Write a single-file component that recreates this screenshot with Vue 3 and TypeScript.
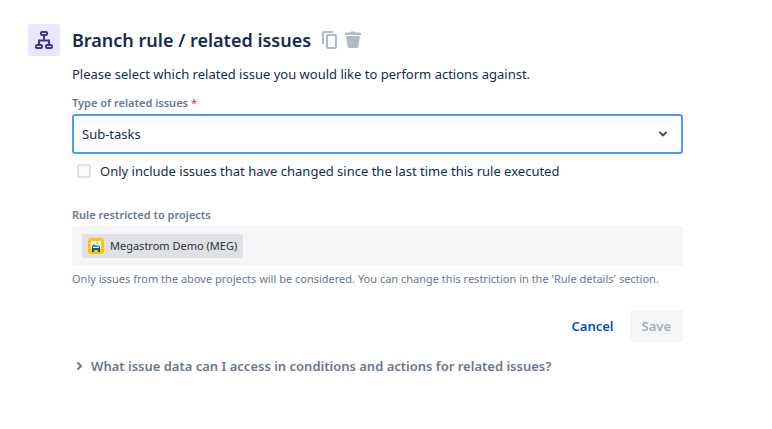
<script setup lang="ts">
import { ref } from 'vue'

const issueTypes: string[] = ['Sub-tasks', 'Parent', 'Stories', 'Epic']
const selectedType = ref<string>('Sub-tasks')
const onlyChanged = ref<boolean>(false)
</script>

<template>
  <main class="panel">
    <div class="badge">
      <svg width="18" height="18" viewBox="0 0 18 18" fill="none" stroke="currentColor" stroke-width="2" aria-hidden="true">
        <rect x="6" y="1" width="6" height="3" rx="1" />
        <rect x="1" y="14" width="6" height="3" rx="1" />
        <rect x="11" y="14" width="6" height="3" rx="1" />
        <path d="M9 4v5M4 14V9.500h10V14" />
      </svg>
    </div>

    <form class="content" @submit.prevent>
      <header class="heading">
        <h1>Branch rule / related issues</h1>
        <div class="tools">
          <button type="button" class="tool" aria-label="Duplicate">
            <svg width="16" height="18" viewBox="0 0 16 18" fill="none" stroke="currentColor" aria-hidden="true">
              <path d="M1 13V2q0-1 1-1h9" stroke-width="2" />
              <rect x="5" y="4" width="9" height="13" rx="1" stroke-width="2" />
            </svg>
          </button>
          <button type="button" class="tool" aria-label="Delete">
            <svg width="16" height="18" viewBox="0 0 16 18" fill="currentColor" aria-hidden="true">
              <path d="M0 2.500q0-1 1-1h4.500q0-1 1-1h3q1 0 1 1H15q1 0 1 1V4H0z" />
              <path d="M1 5h14l-1.600 10.600q-.2 1.400-1.400 1.400H4q-1.200 0-1.400-1.400z" />
            </svg>
          </button>
        </div>
      </header>

      <p class="intro">Please select which related issue you would like to perform actions against.</p>

      <label class="field-label" for="issue-type">Type of related issues<span class="required">*</span></label>
      <div class="select-wrap">
        <select id="issue-type" v-model="selectedType">
          <option v-for="type in issueTypes" :key="type" :value="type">{{ type }}</option>
        </select>
        <svg class="arrow" width="10" height="8" viewBox="0 0 10 8" fill="none" stroke="currentColor" stroke-width="2" stroke-linecap="round" stroke-linejoin="round" aria-hidden="true">
          <path d="M2 2.500l3 3 3-3" />
        </svg>
      </div>

      <label class="check">
        <input v-model="onlyChanged" type="checkbox" />
        <span>Only include issues that have changed since the last time this rule executed</span>
      </label>

      <h2 class="field-label">Rule restricted to projects</h2>
      <div class="projects">
        <span class="chip">
          <svg width="16" height="16" viewBox="0 0 16 16" aria-hidden="true">
            <rect width="16" height="16" rx="3" fill="#ffc400" />
            <path d="M4 2h1v2H4zM11 2h1v2h-1z" fill="#e6d9a0" />
            <rect x="3" y="3" width="10" height="8" rx="1" fill="#fff" />
            <circle cx="9.500" cy="5" r="1.200" fill="#ffc400" />
            <path d="M4 9V7.500L6 6l2 1.500h4V9z" fill="#00a3cf" />
            <path d="M4 9h1v1h6V9h1v5h-2v-2H6v2H4z" fill="#344563" />
          </svg>
          Megastrom Demo (MEG)
        </span>
      </div>
      <p class="help">Only issues from the above projects will be considered. You can change this restriction in the 'Rule details' section.</p>

      <div class="actions">
        <button type="button" class="btn cancel">Cancel</button>
        <button type="submit" class="btn save" disabled>Save</button>
      </div>

      <button type="button" class="expander" aria-expanded="false">
        <svg width="8" height="10" viewBox="0 0 8 10" fill="none" stroke="currentColor" stroke-width="2" stroke-linecap="round" stroke-linejoin="round" aria-hidden="true">
          <path d="M2 2l3 3-3 3" />
        </svg>
        What issue data can I access in conditions and actions for related issues?
      </button>
    </form>
  </main>
</template>

<style>
body {
  background: #fff;
}
</style>

<style scoped>
.panel {
  display: flex;
  align-items: flex-start;
  gap: 12px;
  padding: 24px 89px 24px 28px;
  color: #172b4d;
  font-family: "Noto Sans", "Open Sans", sans-serif;
  font-size: 13px;
  line-height: 20px;
}
.badge {
  display: grid;
  place-items: center;
  flex: none;
  width: 32px;
  height: 32px;
  border-radius: 3px;
  background: #eae6ff;
  color: #403294;
}
.content {
  display: flex;
  flex-direction: column;
  flex: 1;
  min-width: 0;
}
button,
select {
  font: inherit;
  color: inherit;
}
button {
  border: 0;
  background: none;
  cursor: pointer;
}
.heading {
  display: flex;
  align-items: center;
  gap: 11px;
  min-height: 32px;
}
h1 {
  margin: 0;
  font-size: 18px;
  font-weight: 600;
  line-height: 32px;
}
.tools {
  display: flex;
  gap: 7px;
  color: #b3bac5;
}
.tool {
  display: grid;
  padding: 0;
}
.intro {
  margin: 8px 0;
}
.field-label {
  margin: 3px 0;
  color: #6b778c;
  font-size: 11px;
  font-weight: 600;
  line-height: 16px;
}
.required {
  padding-left: 3px;
  color: #de350b;
  font-weight: 400;
}
.select-wrap {
  display: grid;
  align-items: center;
}
.select-wrap > * {
  grid-area: 1 / 1;
}
select {
  appearance: none;
  width: 100%;
  height: 40px;
  padding: 0 32px 0 8px;
  border: 2px solid #4c9aff;
  border-radius: 3px;
  outline: none;
  background: #fff;
}
.arrow {
  justify-self: end;
  margin-right: 15px;
  color: #42526e;
  pointer-events: none;
}
.check {
  display: flex;
  align-items: center;
  gap: 9px;
  margin: 7px 0 23px;
  padding-left: 5px;
}
.check input {
  appearance: none;
  width: 14px;
  height: 14px;
  margin: 0;
  border: 2px solid #dfe1e6;
  border-radius: 3px;
  background: #fafbfc;
}
.check input:checked {
  border-color: #0052cc;
  background: #0052cc;
}
.projects {
  display: flex;
  align-items: center;
  min-height: 40px;
  padding: 0 10px;
  border-radius: 3px;
  background: #f4f5f7;
}
.chip {
  display: flex;
  align-items: center;
  gap: 6px;
  height: 24px;
  padding: 0 6px;
  border-radius: 2px;
  background: #dfe1e6;
  color: #333;
  font-size: 11px;
}
.help {
  margin: 5px 0 23px;
  color: #6b778c;
  font-size: 11px;
  line-height: 16px;
}
.actions {
  display: flex;
  justify-content: flex-end;
  gap: 4px;
}
.btn {
  height: 32px;
  padding: 0 12px;
  border-radius: 3px;
  font-weight: 600;
}
.cancel {
  color: #0052cc;
}
.save {
  background: #f4f5f7;
  color: #a5adba;
  cursor: not-allowed;
}
.expander {
  display: flex;
  align-items: center;
  gap: 7px;
  margin-top: 14px;
  padding: 0 4px;
  color: #6b778c;
  font-weight: 600;
  text-align: left;
}
</style>
